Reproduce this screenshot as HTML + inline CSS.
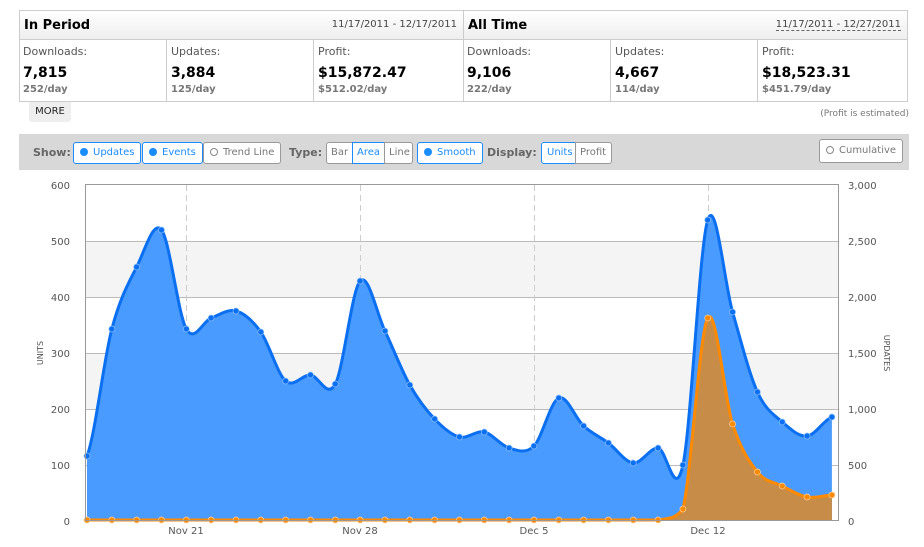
<!DOCTYPE html>
<html><head><meta charset="utf-8"><style>
*{box-sizing:border-box;margin:0;padding:0}
body{width:924px;height:547px;background:#fff;font-family:"DejaVu Sans","Liberation Sans",sans-serif;position:relative;overflow:hidden;color:#000}
.box{position:absolute;top:10px;height:92px;border:1px solid #ccc;background:#fff}
.hd{height:29px;border-bottom:1px solid #ccc;background:linear-gradient(#fff,#eee);position:relative}
.hd b{position:absolute;left:4px;top:7px;font-size:13px}
.hd span{position:absolute;right:6px;top:8px;font-size:10px;color:#444}
.c{position:absolute;top:29px;height:62px;width:147px;border-left:1px solid #ccc}
.c .l{position:absolute;left:4px;top:5px;font-size:11px;color:#555}
.c .v{position:absolute;left:4px;top:25px;font-size:14px;font-weight:bold}
.c .d{position:absolute;left:4px;top:44px;font-size:10px;font-weight:bold;color:#777}
.tb{position:absolute;left:19px;top:134px;width:890px;height:36px;background:#d8d8d8}
.btn{position:absolute;top:8px;height:22px;border:1px solid #999;border-radius:3px;background:#fff;font-size:10px;color:#777;line-height:20px;padding:0 6px}
.on{border-color:#1a8cff;color:#1a8cff}
.lb{position:absolute;top:12px;font-size:11px;font-weight:bold;color:#666}
.dot{display:inline-block;width:8px;height:8px;border-radius:50%;background:#1a8cff;margin-right:5px;vertical-align:-1px}
.odot{display:inline-block;width:8px;height:8px;border-radius:50%;border:1px solid #888;margin-right:5px;vertical-align:-1px}
svg text{font-family:"DejaVu Sans","Liberation Sans",sans-serif;font-size:10px;fill:#555}
</style></head><body>
<div class="box" style="left:19px;width:445px">
<div class="hd"><b>In Period</b><span>11/17/2011 - 12/17/2011</span></div>
<div class="c" style="left:-1px;border-left:none"><div class="l">Downloads:</div><div class="v">7,815</div><div class="d">252/day</div></div>
<div class="c" style="left:146px"><div class="l">Updates:</div><div class="v">3,884</div><div class="d">125/day</div></div>
<div class="c" style="left:293px"><div class="l">Profit:</div><div class="v">$15,872.47</div><div class="d">$512.02/day</div></div>
</div>
<div class="box" style="left:463px;width:445px">
<div class="hd"><b>All Time</b><span style="border-bottom:1px dashed #666">11/17/2011 - 12/27/2011</span></div>
<div class="c" style="left:-1px;border-left:none"><div class="l">Downloads:</div><div class="v">9,106</div><div class="d">222/day</div></div>
<div class="c" style="left:146px"><div class="l">Updates:</div><div class="v">4,667</div><div class="d">114/day</div></div>
<div class="c" style="left:293px"><div class="l">Profit:</div><div class="v">$18,523.31</div><div class="d">$451.79/day</div></div>
</div>
<div style="position:absolute;left:29px;top:102px;width:42px;height:20px;background:#eee;border-radius:0 0 3px 3px;font-size:10px;line-height:20px;text-align:center;color:#222">MORE</div>
<div style="position:absolute;right:15px;top:109px;font-size:9px;color:#777">(Profit is estimated)</div>
<div class="tb">
<div class="lb" style="left:14px">Show:</div>
<div class="btn on" style="left:54px"><span class="dot"></span>Updates</div>
<div class="btn on" style="left:123px"><span class="dot"></span>Events</div>
<div class="btn" style="left:184px"><span class="odot"></span>Trend Line</div>
<div class="lb" style="left:270px">Type:</div>
<div class="btn" style="left:307px;width:27px;border-radius:3px 0 0 3px;padding:0 4px">Bar</div>
<div class="btn on" style="left:333px;width:33px;border-radius:0;padding:0 4px">Area</div>
<div class="btn" style="left:365px;width:29px;border-radius:0 3px 3px 0;padding:0 4px">Line</div>
<div class="btn on" style="left:398px"><span class="dot"></span>Smooth</div>
<div class="lb" style="left:468px">Display:</div>
<div class="btn on" style="left:522px;width:35px;border-radius:3px 0 0 3px;padding:0 5px">Units</div>
<div class="btn" style="left:556px;width:37px;border-radius:0 3px 3px 0;padding:0 4px">Profit</div>
<div class="btn" style="left:800px;top:5px;height:24px;line-height:22px"><span class="odot"></span>Cumulative</div>
</div>
<svg id="ch" width="924" height="547" style="position:absolute;left:0;top:0">
<rect x="85" y="241" width="754" height="56" fill="#f4f4f4"/>
<rect x="85" y="353" width="754" height="56" fill="#f4f4f4"/>
<g stroke="#bbb" stroke-width="1">
<line x1="85" y1="241.5" x2="839" y2="241.5"/><line x1="85" y1="297.5" x2="839" y2="297.5"/><line x1="85" y1="353.5" x2="839" y2="353.5"/><line x1="85" y1="409.5" x2="839" y2="409.5"/><line x1="85" y1="465.5" x2="839" y2="465.5"/>
</g>
<g stroke="#ccc" stroke-dasharray="6,4"><line x1="186.5" y1="185" x2="186.5" y2="521"/><line x1="360.5" y1="185" x2="360.5" y2="521"/><line x1="534.5" y1="185" x2="534.5" y2="521"/><line x1="708.5" y1="185" x2="708.5" y2="521"/></g>
<g id="series"></g>
<rect x="85.5" y="184.5" width="753" height="336" fill="none" stroke="#999"/>
<g text-anchor="end"><text x="70" y="189">600</text><text x="70" y="245">500</text><text x="70" y="301">400</text><text x="70" y="357">300</text><text x="70" y="413">200</text><text x="70" y="469">100</text><text x="70" y="525">0</text></g>
<g><text x="848" y="189">3,000</text><text x="848" y="245">2,500</text><text x="848" y="301">2,000</text><text x="848" y="357">1,500</text><text x="848" y="413">1,000</text><text x="848" y="469">500</text><text x="848" y="525">0</text></g>
<g text-anchor="middle"><text x="186" y="534">Nov 21</text><text x="360" y="534">Nov 28</text><text x="534" y="534">Dec 5</text><text x="708" y="534">Dec 12</text></g>
<text transform="translate(43,353) rotate(-90)" text-anchor="middle" style="font-size:8px">UNITS</text>
<text transform="translate(884,353) rotate(90)" text-anchor="middle" style="font-size:8px">UPDATES</text>
</svg>
<script>
var b=[456,329,267,230,329,318,311,332,381,375,384,281,331,385,419,437,432,448,446,398,426,443,463,448,465,220,312,392,422,436,417];
var o=[];for(var i=0;i<31;i++)o.push(520);o[24]=509;o[25]=318;o[26]=424;o[27]=472;o[28]=486;o[29]=497;o[30]=495;
function X(i){return 87+i*24.83;}
function path(a){var d="M"+X(0)+","+a[0];for(var i=0;i<a.length-1;i++){var p0=a[Math.max(i-1,0)],p1=a[i],p2=a[i+1],p3=a[Math.min(i+2,a.length-1)];var x1=X(i),x2=X(i+1),dx=(x2-x1)/3;var c1=Math.min(520,p1+(p2-p0)/6),c2=Math.min(520,p2-(p3-p1)/6);d+=" C"+(x1+dx)+","+c1+" "+(x2-dx)+","+c2+" "+x2+","+p2;}return d;}
var s="";
var pb=path(b),po=path(o);
s+='<path d="'+pb+' L'+X(30)+',521 L'+X(0)+',521Z" fill="#4a9bff"/>';
s+='<path d="'+po+' L'+X(30)+',521 L'+X(0)+',521Z" fill="#c68c48"/>';
s+='<path d="'+pb+'" fill="none" stroke="#0a6ff0" stroke-width="3"/>';
s+='<path d="'+po+'" fill="none" stroke="#ff8a00" stroke-width="3"/>';
for(var i=0;i<31;i++){s+='<circle cx="'+X(i)+'" cy="'+b[i]+'" r="3" fill="#0a6ff0" stroke="#8fc0ff" stroke-width="0.7"/>';s+='<circle cx="'+X(i)+'" cy="'+o[i]+'" r="3" fill="#ff8a00" stroke="#ffd0a0" stroke-width="0.7"/>';}
document.getElementById("series").innerHTML=s;
</script>
</body></html>
